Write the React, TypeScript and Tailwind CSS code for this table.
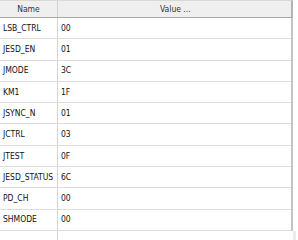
const ROWS: [string, string][] = [
  ["LSB_CTRL", "00"],
  ["JESD_EN", "01"],
  ["JMODE", "3C"],
  ["KM1", "1F"],
  ["JSYNC_N", "01"],
  ["JCTRL", "03"],
  ["JTEST", "0F"],
  ["JESD_STATUS", "6C"],
  ["PD_CH", "00"],
  ["SHMODE", "00"],
];

export default function App() {
  return (
    <div
      className="w-[298px] h-[240px] bg-white flex overflow-hidden text-[8.5px] text-[#111]"
      style={{ fontFamily: "'DejaVu Sans Condensed', 'Liberation Sans', sans-serif" }}
    >
      <div className="w-[293px] h-full flex flex-col">
        <div className="flex h-[18px] bg-[#efefef] border-t border-[#d8d8d8] border-b border-b-[#a8a8a8] border-r-2 border-r-[#b4b4b4] text-[#333]">
          <div className="w-[58px] border-r border-[#d0d0d0] flex items-center justify-center">Name</div>
          <div className="flex-1 flex items-center pl-[102px]">Value ...</div>
        </div>
        <div className="flex flex-col border-r-2 border-[#c4c4c4]">
          {ROWS.map(([name, value]) => (
            <div key={name} className="flex h-[21.3px] border-b border-[#dcdcdc]">
              <div className="w-[58px] border-r border-[#d4d4d4] pl-[3px] flex items-center whitespace-nowrap">
                {name}
              </div>
              <div className="flex-1 pl-[3px] flex items-center">{value}</div>
            </div>
          ))}
        </div>
        <div className="flex-1 flex">
          <div className="w-[58px] border-r border-[#d4d4d4]" />
        </div>
      </div>
      <div className="w-[3px] flex flex-col">
        <div className="h-[231px]" />
        <div className="flex-1 bg-[#ececec]" />
      </div>
    </div>
  );
}
